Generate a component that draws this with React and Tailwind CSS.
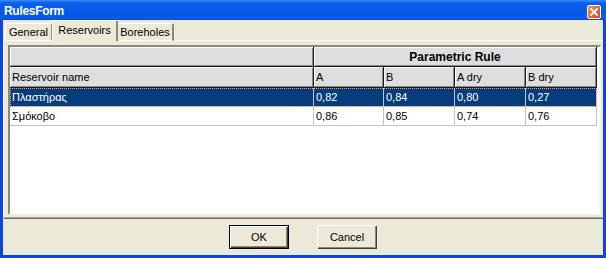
const font = "font-['Liberation_Sans',Arial,sans-serif]";

const cols = [304, 70, 71, 71, 71];

const rows = [
  { cells: ['Πλαστήρας', '0,82', '0,84', '0,80', '0,27'], selected: true },
  { cells: ['Σμόκοβο', '0,86', '0,85', '0,74', '0,76'] },
];

const fixedCell =
  'h-full shrink-0 flex items-center px-[2px] bg-[#dedede] border-r border-b border-[#1a1a1a] shadow-[inset_1px_1px_0_#ffffff,inset_-1px_-1px_0_#8a8a8a]';

function Tab({ label, active, width }) {
  if (active) {
    return (
      <div
        className="h-[21px] shrink-0 flex items-center justify-center rounded-t-[2px] bg-[#ece9d8] border-t border-l border-white border-r-2 border-r-[#8c8a80] pb-[2px] -mx-[1px] z-10"
        style={{ width }}
      >
        {label}
      </div>
    );
  }
  return (
    <div
      className="h-[18px] shrink-0 flex items-center justify-center rounded-t-[2px] bg-[#ece9d8] border-t border-l border-white border-r-2 border-r-[#8c8a80] border-b border-b-white"
      style={{ width }}
    >
      {label}
    </div>
  );
}

function Grid() {
  return (
    <div className="flex-1 bg-white border-2 border-t-[#8a887c] border-l-[#8a887c] border-b-[#f7f6f0] border-r-[#f7f6f0] overflow-hidden">
      <div className="flex h-[20px]">
        <div className={`${fixedCell} w-[304px]`} />
        <div className={`${fixedCell} w-[283px] justify-center font-bold text-[12px]`}>Parametric Rule</div>
      </div>
      <div className="flex h-[21px]">
        {['Reservoir name', 'A', 'B', 'A dry', 'B dry'].map((h, i) => (
          <div key={h} className={`${fixedCell} ${i === 0 ? 'w-[304px]' : i === 1 ? 'w-[70px]' : 'w-[71px]'}`}>
            {h}
          </div>
        ))}
      </div>
      {rows.map((r, ri) => (
        <div key={ri} className="relative flex h-[19px] w-[587px]">
          {r.cells.map((c, i) => (
            <div
              key={i}
              className={`h-full shrink-0 flex items-center px-[2px] border-r border-b border-[#c4c4c4] ${
                r.selected ? 'bg-[#073c7c] text-white' : 'bg-white text-black'
              } ${i === 0 ? 'w-[304px]' : i === 1 ? 'w-[70px]' : 'w-[71px]'}`}
            >
              {c}
            </div>
          ))}
          {r.selected && (
            <div className="absolute inset-0 border border-dotted border-[#f0a860] pointer-events-none" />
          )}
        </div>
      ))}
    </div>
  );
}

function Button({ children, isDefault }) {
  return (
    <div
      className={`w-[60px] h-[24px] flex items-center justify-center bg-[#ece9d8] ${
        isDefault
          ? 'border border-black shadow-[inset_1px_1px_0_#ffffff,inset_-1px_-1px_0_#404040,inset_-2px_-2px_0_#8a887c]'
          : 'shadow-[inset_1px_1px_0_#ffffff,inset_-1px_-1px_0_#404040,inset_-2px_-2px_0_#8a887c]'
      }`}
    >
      {children}
    </div>
  );
}

export default function App() {
  return (
    <div className={`w-[606px] h-[258px] flex flex-col bg-[#0a46dc] text-[11px] text-black ${font}`}>
      <div className="h-[20px] shrink-0 flex items-center justify-between pl-[4px] pr-[5px] bg-[linear-gradient(to_bottom,#3c8cf8_0%,#0a5fea_15%,#0558e6_70%,#0a5ce8_90%,#0048d6_100%)]">
        <span className="text-white font-bold text-[12px] tracking-[-0.3px] pt-[1px]">RulesForm</span>
        <div className="w-[14px] h-[14px] mt-[3px] rounded-[2px] border border-white bg-[linear-gradient(135deg,#f08a60,#d8431c)] flex items-center justify-center">
          <svg width="8" height="8" viewBox="0 0 8 8">
            <path d="M1 1 L7 7 M7 1 L1 7" stroke="#fff" strokeWidth="1.8" strokeLinecap="square" />
          </svg>
        </div>
      </div>

      <div className="flex-1 flex flex-col mx-[3px] mb-[3px] bg-[#ece9d8]">
        <div className="h-[21px] shrink-0 flex items-end pl-[2px]">
          <Tab label="General" width={48} />
          <Tab label="Reservoirs" active width={66} />
          <Tab label="Boreholes" width={57} />
          <div className="flex-1 border-b border-white" />
        </div>

        <div className="h-[178px] shrink-0 flex flex-col pt-[4px] pl-[4px] pr-[2px] pb-[3px] border-l border-white border-b border-b-[#716f64] shadow-[inset_0_-1px_0_#aca899]">
          <Grid />
        </div>

        <div className="flex-1 flex items-center justify-center gap-[28px]">
          <Button isDefault>OK</Button>
          <Button>Cancel</Button>
        </div>
      </div>
    </div>
  );
}
